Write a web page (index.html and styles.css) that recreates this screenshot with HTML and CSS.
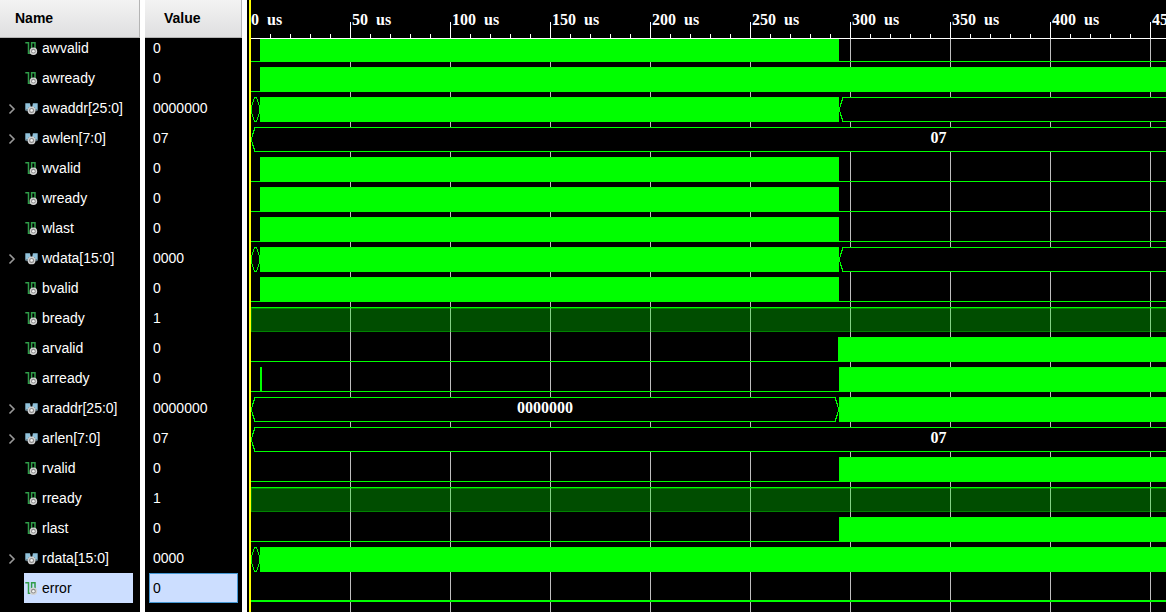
FILE: index.html
```html
<!DOCTYPE html>
<html lang="en">
<head>
<meta charset="utf-8">
<title>Waveform</title>
<link rel="stylesheet" href="styles.css">
</head>
<body>
<svg class="defs" aria-hidden="true">
  <symbol id="scalar" viewBox="0 0 14 14">
    <path d="M0.3 1.7H3.5V12.3H6.6V1.7H10V8.5" fill="none" stroke="#2f9c48" stroke-width="1.5"/>
    <circle cx="8.4" cy="10.2" r="3.1" fill="#8c8c8c" stroke="#d4d4d4" stroke-width="1.4"/>
    <circle cx="8.4" cy="10.2" r="1.3" fill="#f4f4f4"/>
  </symbol>
  <symbol id="vector" viewBox="0 0 14 14">
    <path d="M0.3 2.3H5L5.8 6H4L2.6 9.5H0.3ZM7.9 2.3H12.7V9.5H10.5L9.2 6H7.2Z" fill="#8fc1da"/>
    <path d="M0.3 8.3H3V10.3H1.5ZM10.2 8.3H12.7L11.7 10.3H10.2Z" fill="#5d7480"/>
    <circle cx="6.6" cy="9.4" r="3.2" fill="#8c8c8c" stroke="#d4d4d4" stroke-width="1.4"/>
    <circle cx="6.6" cy="9.4" r="1.3" fill="#f4f4f4"/>
  </symbol>
  <symbol id="chevron" viewBox="0 0 8 12">
    <path d="M1.5 1.5L6 6L1.5 10.5" fill="none" stroke="#999" stroke-width="1.6"/>
  </symbol>
  <symbol id="open" viewBox="0 0 4 25">
    <path d="M4 0.5H3.5V3L2.5 4V6L1.5 7V9.5L0.5 10.5V14.5L1.5 15.5V18L2.5 19V21L3.5 22V24.5H4" fill="none" stroke="#0f0"/>
  </symbol>
  <symbol id="diamond" viewBox="0 0 9 25">
    <path d="M3.5 0.5H5.5L6.5 3.5L7.5 6.5L8.5 10V15L7.5 18.5L6.5 21.5L5.5 24.5H3.5L2.5 21.5L1.5 18.5L0.5 15V10L1.5 6.5L2.5 3.5Z" fill="#000" stroke="#0f0"/>
  </symbol>
</svg>
<main class="viewer">
  <section class="pane">
    <h2 class="head">Name</h2>
    <ul class="rows" id="names"></ul>
  </section>
  <section class="pane">
    <h2 class="head head-value">Value</h2>
    <ul class="rows" id="values"></ul>
  </section>
  <section class="wave">
    <div class="ruler" id="ruler"></div>
    <div class="lanes" id="lanes"></div>
  </section>
</main>
<script src="wave.js"></script>
</body>
</html>
```
FILE: styles.css
```css
* { box-sizing: border-box; }
body {
  margin: 0;
  background: #fff;
  color: #fff;
  font: 14px/30px "Liberation Sans", Arial, sans-serif;
}
.defs { display: none; }
.viewer {
  display: grid;
  grid-template-columns: 140px 97px minmax(0, 1fr);
  gap: 5px;
  min-height: 100vh;
}
.pane { background: #000; }
.head {
  height: 38px;
  margin: 0;
  padding: 0 15px;
  border-right: 1px solid #b4b4b4;
  border-bottom: 1px solid #b4b4b4;
  background: linear-gradient(#f3f3f3, #dfdfe0);
  color: #000;
  font-size: 14px;
  line-height: 36px;
}
.head-value { padding-left: 19px; }
.rows { margin: 0; padding: 0; list-style: none; overflow: hidden; }
.rows > :first-child { margin-top: -5px; }
.name { display: grid; grid-template: 30px / 24px 1fr; padding-right: 7px; }
.signal { grid-column: 2; display: flex; align-items: center; gap: 3px; padding-left: 1px; white-space: nowrap; }
.signal svg { width: 14px; height: 14px; flex: none; }
.toggle {
  display: flex;
  align-items: center;
  height: 30px;
  padding: 2px 0 0 8px;
  border: 0;
  background: none;
}
.toggle svg { width: 8px; height: 12px; }
.value { height: 30px; margin: 0 4px; padding-left: 4px; }
.selected .signal, .value.selected { background: #ccdeff; color: #000; }
.value.selected { padding-left: 3px; border: 1px solid #4597d3; line-height: 28px; }

.wave {
  display: flex;
  flex-direction: column;
  min-width: 0;
  padding-left: 2px;
  border-left: 2px solid #000;
  background: #000;
  box-shadow: inset 2px 0 #ff0;
  overflow: hidden;
}
.ruler {
  display: flex;
  height: 39px;
  flex: none;
  border-bottom: 1px solid #fff;
  background:
    linear-gradient(90deg, transparent 99px, #fff 99px) 0 100% / 100px 16px repeat-x,
    linear-gradient(90deg, transparent 19px, #fff 19px) 0 100% / 20px 4px repeat-x;
}
.tick {
  display: flex;
  flex: none;
  gap: 8px;
  width: 100px;
  padding-left: 2px;
  font: bold 16px/39px "Liberation Serif", "Times New Roman", serif;
}
.tick:first-child { width: 99px; padding-left: 0; }
.lanes {
  flex: 1;
  overflow: hidden;
  background: linear-gradient(90deg, transparent 99px, #bebebe 99px) 0 0 / 100px 100%;
}
.lanes > :first-child { margin-top: -6px; }
.lane { display: flex; height: 30px; padding: 4px 0 1px; }
.lane > * { flex: none; height: 25px; }
.lane > .rest { flex: 1; }
.low { border-bottom: 1px solid #0f0; }
.low.selected { border-bottom-width: 2px; }
.busy { background: #0f0; }
.high {
  border: 1px solid rgba(0, 255, 0, 0.3);
  border-top: 1px solid #0f0;
  border-right: 0;
  background: rgba(0, 255, 0, 0.3);
  box-shadow: inset 0 1px rgba(0, 255, 0, 0.3);
}
.diamond { width: 9px; background: #000; }
.bus { display: flex; background: #000; }
.bus svg { width: 4px; height: 25px; }
.bus .end { transform: scaleX(-1); }
.body {
  flex: 1;
  border: 1px solid #0f0;
  border-width: 1px 0;
  text-align: center;
  font: bold 16px/20px "Liberation Serif", "Times New Roman", serif;
}
.bus svg, .diamond { shape-rendering: crispEdges; }
```
FILE: wave.js
```javascript
// Segment: [kind, width in pixels (0 = to the right edge), label]
const written = [["low", 9], ["busy", 579], ["low", 0]];
const length = [["bus", 1375, "07"]];
const signals = [
  ["awvalid", "0", written],
  ["awready", "0", [["low", 9], ["busy", 0]]],
  ["awaddr[25:0]", "0000000", [["diamond", 9], ["busy", 579], ["bus", 0]]],
  ["awlen[7:0]", "07", length],
  ["wvalid", "0", written],
  ["wready", "0", written],
  ["wlast", "0", written],
  ["wdata[15:0]", "0000", [["diamond", 9], ["busy", 579], ["bus", 0]]],
  ["bvalid", "0", written],
  ["bready", "1", [["high", 0]]],
  ["arvalid", "0", [["low", 587], ["busy", 0]]],
  ["arready", "0", [["low", 9], ["busy", 2], ["low", 577], ["busy", 0]]],
  ["araddr[25:0]", "0000000", [["bus", 588, "0000000"], ["busy", 0]]],
  ["arlen[7:0]", "07", length],
  ["rvalid", "0", [["low", 588], ["busy", 0]]],
  ["rready", "1", [["high", 0]]],
  ["rlast", "0", [["low", 588], ["busy", 0]]],
  ["rdata[15:0]", "0000", [["diamond", 9], ["busy", 0]]],
  ["error", "0", [["low", 0]], true]
];
const icon = (id, cls = "") => `<svg class="${cls}" aria-hidden="true"><use href="#${id}"/></svg>`;

function segment([kind, width, label = ""], selected) {
  if (kind === "diamond") return icon("diamond", "diamond");
  const size = width ? `style="width:${width}px"` : "";
  const cls = kind + (width ? "" : " rest") + (selected ? " selected" : "");
  const inner = kind === "bus"
    ? icon("open") + `<span class="body">${label}</span>` + (width ? icon("open", "end") : "")
    : "";
  return `<div class="${cls}" ${size}>${inner}</div>`;
}

document.getElementById("names").innerHTML = signals.map(([name, , , selected]) => {
  const vector = name.includes("[");
  const toggle = vector ? `<button class="toggle" aria-label="Expand ${name}">${icon("chevron")}</button>` : "";
  return `<li class="name${selected ? " selected" : ""}">${toggle}<span class="signal">${icon(vector ? "vector" : "scalar")}${name}</span></li>`;
}).join("");
document.getElementById("values").innerHTML = signals.map(([, value, , selected]) =>
  `<li class="value${selected ? " selected" : ""}">${value}</li>`).join("");
document.getElementById("lanes").innerHTML = signals.map(([, , segments, selected]) =>
  `<div class="lane">${segments.map(s => segment(s, selected)).join("")}</div>`).join("");
document.getElementById("ruler").innerHTML = Array.from({ length: 10 }, (_, i) =>
  `<div class="tick"><span>${i * 50}</span><span>us</span></div>`).join("");
```
